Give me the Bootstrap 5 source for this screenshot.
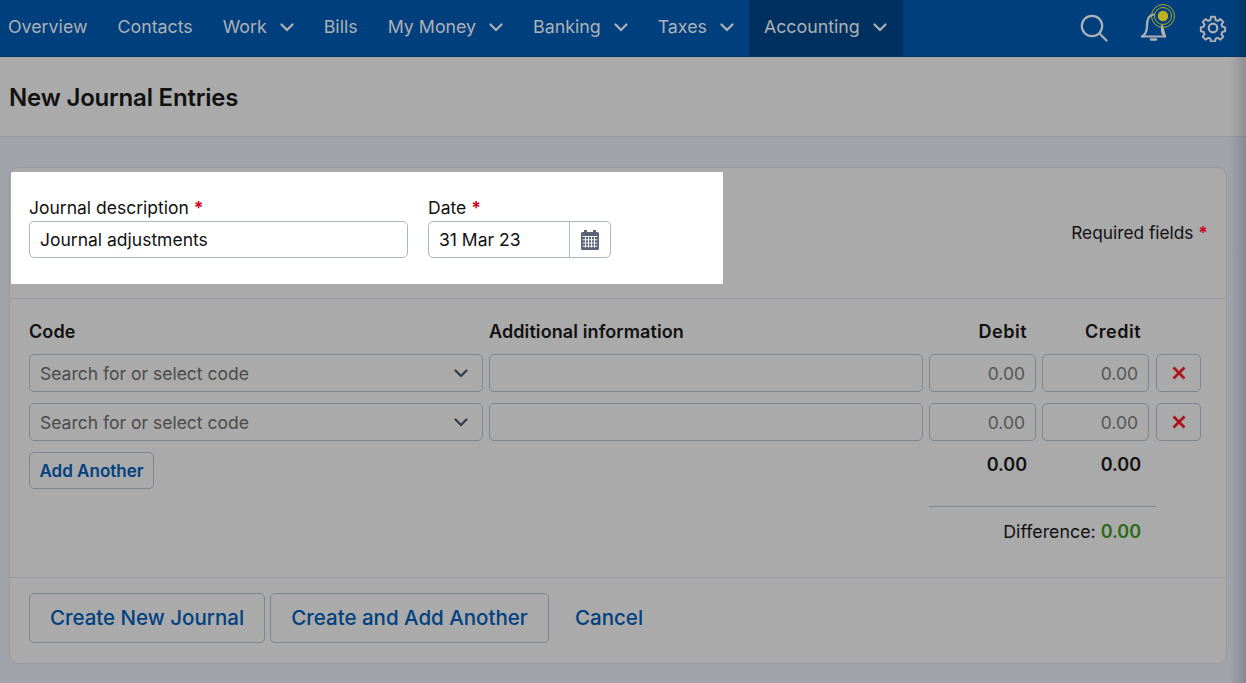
<!DOCTYPE html>
<html lang="en">
<head>
<meta charset="utf-8">
<title>New Journal Entries</title>
<link href="https://cdn.jsdelivr.net/npm/bootstrap@5.3.0/dist/css/bootstrap.min.css" rel="stylesheet">
<style>
html,body{height:683px;overflow:hidden}
body{font-family:"Inter","Liberation Sans",sans-serif;font-size:17.5px;background:#a0a3a9;color:#111;position:relative}
.topbar{height:57px;background:#003f7d;padding:0;border-bottom:1px solid #003468;align-items:stretch;flex-wrap:nowrap}
.topbar .nav-link{color:#aeb2b6;font-size:17.8px;padding:0 15px 2px;display:flex;align-items:center;gap:13px;height:56px}
.topbar .nav-item:first-child .nav-link{padding-left:8px}
.topbar .nav-item.on .nav-link{background:#00305f;padding-right:16px}
.tools{padding-right:19px;align-items:center}
.ic-search{margin-right:31px}
.ic-bell{margin-right:24px;align-self:flex-start;margin-top:4px}
.pagehead{height:80px;background:#aaa;border-bottom:1px solid #979a9f;padding-left:9px}
.pagehead h1{font-size:24px;font-weight:600;margin:0;padding-top:3px;color:#111;letter-spacing:-.2px}
.sheet{margin:30px 19px 0 9px;height:497px;background:#aaa;border:1px solid #979a9f;border-radius:10px;overflow:hidden}
.headpart{height:131px;border-bottom:1px solid #979a9f;padding-right:18px}
.spot{background:#fff;width:712px;height:112px;margin:4px 0 0 1px;padding:23px 0 0 18px;gap:20px}
.fld-a{width:379px}.fld-b{width:183px}
.fld-lab{font-size:17.5px;line-height:25px;color:#111;margin:0 0 1px}
.star{color:#d0021b;font-weight:700}
.spot .form-control{height:37px;font-size:17.500px;color:#111;border-color:#aeb6bd;border-radius:5px;padding:0 10px;background:#fff}
.spot .cal{width:42px;border:1px solid #aeb6bd;border-radius:0 5px 5px 0;background:#fff;padding:0;display:flex;align-items:center;justify-content:center}
.req{font-size:17.3px;margin-top:52px;color:#111}
.linepart{height:279px;padding:20px 0 0 19px;position:relative;border-bottom:1px solid #979a9f}
.gridrow{display:grid;grid-template-columns:454px 434px 107px 107px 45px;column-gap:6px;margin-bottom:11px}
.gridrow.cap{font-weight:600;font-size:18px;line-height:26px;margin-bottom:9px;color:#111;letter-spacing:.1px}
.gridrow>:nth-child(5){margin-left:1px}
.gridrow .form-control,.gridrow .form-select{height:38px;background-color:transparent;border-color:#7d858d;border-radius:5px;font-size:17.5px;color:#4a4a4a;padding:0 10px}
.gridrow .form-select{padding-top:2px;background-image:url("data:image/svg+xml,%3Csvg xmlns='http://www.w3.org/2000/svg' viewBox='0 0 14 9'%3E%3Cpath d='M1.5 1.5 7 7l5.5-5.5' fill='none' stroke='%23333c45' stroke-width='2.2' stroke-linecap='round'/%3E%3C/svg%3E");background-size:14px 9px;background-position:right 14px center}
.gridrow .form-control::placeholder{color:#555}
.numtext{text-align:right}
.capnum{text-align:right;padding-right:9px;letter-spacing:.5px}
.capnum2{text-align:right;padding-right:8px;letter-spacing:.5px}
.xbtn{height:38px;width:45px;border:1px solid #7d858d;border-radius:5px;background:transparent;padding:0;display:flex;align-items:center;justify-content:center}
.addbtn{height:37px;width:125px;border:1px solid #7d858d;border-radius:5px;background:transparent;color:#00407f;font-size:17px;font-weight:600;padding:2px 0 0}
.belowrow{display:flex;justify-content:space-between;align-items:flex-start}
.sums{width:227px;margin-right:70px;margin-top:1px}
.sumnums{display:flex;font-weight:600;font-size:18px;line-height:24px;padding-bottom:29px;border-bottom:1px solid #7d858d}
.sumnums span{width:98px;text-align:right}
.sumnums span+span{width:114px}
.diff{text-align:right;padding-right:15px;margin-top:12px;line-height:26px;font-size:17.800px}
.diff b{color:#2a6a16;font-weight:600;font-size:18px}
.foot{padding:15px 0 0 19px;gap:5px;align-items:center}
.bigbtn{height:50px;border:1px solid #7d858d;border-radius:5px;background:transparent;color:#00407f;font-size:20.5px;font-weight:500;padding:1px 0 0}
.b1{width:236px}.b2{width:279px}
.lnk{color:#00407f;font-size:20.5px;font-weight:500;text-decoration:none;margin-left:21px;padding-top:1px}
.edgeshade{position:absolute;top:0;right:0;bottom:0;width:16px;background:linear-gradient(to right,rgba(0,0,0,0),rgba(0,0,0,.16));pointer-events:none}
</style>
</head>
<body>
<nav class="navbar topbar justify-content-between">
  <ul class="navbar-nav flex-row">
    <li class="nav-item"><a class="nav-link" href="#">Overview</a></li>
    <li class="nav-item"><a class="nav-link" href="#">Contacts</a></li>
    <li class="nav-item"><a class="nav-link" href="#">Work <svg width="14" height="9" viewBox="0 0 14 9"><path d="M1.5 1.5 7 7l5.5-5.5" fill="none" stroke="#aeb2b6" stroke-width="2.2" stroke-linecap="round"/></svg></a></li>
    <li class="nav-item"><a class="nav-link" href="#">Bills</a></li>
    <li class="nav-item"><a class="nav-link" href="#">My Money <svg width="14" height="9" viewBox="0 0 14 9"><path d="M1.5 1.5 7 7l5.5-5.5" fill="none" stroke="#aeb2b6" stroke-width="2.2" stroke-linecap="round"/></svg></a></li>
    <li class="nav-item"><a class="nav-link" href="#">Banking <svg width="14" height="9" viewBox="0 0 14 9"><path d="M1.5 1.5 7 7l5.5-5.5" fill="none" stroke="#aeb2b6" stroke-width="2.2" stroke-linecap="round"/></svg></a></li>
    <li class="nav-item"><a class="nav-link" href="#">Taxes <svg width="14" height="9" viewBox="0 0 14 9"><path d="M1.5 1.5 7 7l5.5-5.5" fill="none" stroke="#aeb2b6" stroke-width="2.2" stroke-linecap="round"/></svg></a></li>
    <li class="nav-item on"><a class="nav-link" href="#">Accounting <svg width="14" height="9" viewBox="0 0 14 9"><path d="M1.5 1.5 7 7l5.5-5.5" fill="none" stroke="#aeb2b6" stroke-width="2.2" stroke-linecap="round"/></svg></a></li>
  </ul>
  <div class="d-flex tools">
    <svg class="ic-search" width="28" height="28" viewBox="0 0 28 28" fill="none" stroke="#aeb2b6" stroke-width="2.2" stroke-linecap="round"><circle cx="12" cy="12" r="10.200"/><path d="M19.500 19.500 26.500 26.500"/></svg>
    <svg class="ic-bell" width="36" height="38" viewBox="0 0 36 38" fill="none"><path d="M3 32.500c3-1.500 5-5 5-11 0-7 2.500-10.500 6.500-11M23 22v5c0 2 1.300 4 3 5.500z" stroke="#aeb2b6" stroke-width="2.200" stroke-linejoin="round" stroke-linecap="round"/><path d="M3 32.500h23" stroke="#aeb2b6" stroke-width="2.200" stroke-linecap="round"/><path d="M12 35.500h5" stroke="#aeb2b6" stroke-width="2.400" stroke-linecap="round"/><circle cx="24" cy="12" r="11.500" stroke="#b3a92a" stroke-width="1"/><circle cx="24" cy="12" r="8.500" stroke="#b3a92a" stroke-width="1"/><circle cx="24" cy="12" r="5.200" fill="#bdb021"/></svg>
    <svg width="28" height="28" viewBox="0 0 28 28" fill="none" stroke="#aeb2b6" stroke-width="2.200" stroke-linejoin="round"><path d="M11.800 1.500h4.400l.7 3.600 2.400 1 3-2 3.100 3.100-2 3 1 2.400 3.100.7v4.400l-3.100.7-1 2.400 2 3-3.100 3.100-3-2-2.400 1-.7 3.100h-4.400l-.7-3.100-2.400-1-3 2-3.100-3.100 2-3-1-2.400-3.100-.7v-4.400l3.100-.7 1-2.400-2-3 3.100-3.100 3 2 2.400-1z" transform="translate(1.400 1.400) scale(.9)"/><circle cx="14" cy="14" r="4.300"/></svg>
  </div>
</nav>
<div class="pagehead d-flex align-items-center"><h1>New Journal Entries</h1></div>
<main class="sheet">
  <section class="headpart d-flex justify-content-between align-items-start">
    <div class="spot d-flex">
      <div class="fld-a">
        <label class="fld-lab d-block" for="jd">Journal description <span class="star">*</span></label>
        <input id="jd" class="form-control" type="text" value="Journal adjustments">
      </div>
      <div class="fld-b">
        <label class="fld-lab d-block" for="dt">Date <span class="star">*</span></label>
        <div class="input-group">
          <input id="dt" class="form-control" type="text" value="31 Mar 23">
          <button class="cal" type="button" aria-label="Pick date"><svg width="18" height="20" viewBox="0 0 18 20"><path fill="#5b6475" d="M3 0h3v2h6V0h3v2h1.500A1.500 1.500 0 0 1 18 3.500v15a1.500 1.500 0 0 1-1.500 1.500h-15A1.500 1.500 0 0 1 0 18.500v-15A1.500 1.500 0 0 1 1.500 2H3z"/><path stroke="#fff" stroke-width=".9" d="M1.500 6.500h15M1.500 9.800h15M1.500 13h15M1.500 16.200h15M4.500 6.500v11M7.500 6.500v11M10.500 6.500v11M13.500 6.500v11"/></svg></button>
        </div>
      </div>
    </div>
    <div class="req">Required fields <span class="star">*</span></div>
  </section>
  <section class="linepart">
    <div class="gridrow cap"><div>Code</div><div>Additional information</div><div class="capnum">Debit</div><div class="capnum2">Credit</div><div></div></div>
    <div class="gridrow">
      <select class="form-select" aria-label="Code"><option>Search for or select code</option></select>
      <input class="form-control" type="text" aria-label="Additional information">
      <input class="form-control numtext" type="text" placeholder="0.00" aria-label="Debit">
      <input class="form-control numtext" type="text" placeholder="0.00" aria-label="Credit">
      <button class="xbtn" type="button" aria-label="Remove"><svg width="14" height="14" viewBox="0 0 14 14"><path d="M1.500 1.500 12.500 12.500M12.500 1.500 1.500 12.500" stroke="#ad1218" stroke-width="2.600"/></svg></button>
    </div>
    <div class="gridrow">
      <select class="form-select" aria-label="Code"><option>Search for or select code</option></select>
      <input class="form-control" type="text" aria-label="Additional information">
      <input class="form-control numtext" type="text" placeholder="0.00" aria-label="Debit">
      <input class="form-control numtext" type="text" placeholder="0.00" aria-label="Credit">
      <button class="xbtn" type="button" aria-label="Remove"><svg width="14" height="14" viewBox="0 0 14 14"><path d="M1.500 1.500 12.500 12.500M12.500 1.500 1.500 12.500" stroke="#ad1218" stroke-width="2.600"/></svg></button>
    </div>
    <div class="belowrow">
      <button class="addbtn" type="button">Add Another</button>
      <div class="sums">
        <div class="sumnums"><span>0.00</span><span>0.00</span></div>
        <div class="diff">Difference: <b>0.00</b></div>
      </div>
    </div>
  </section>
  <footer class="foot d-flex">
    <button class="bigbtn b1" type="button">Create New Journal</button>
    <button class="bigbtn b2" type="button">Create and Add Another</button>
    <a class="lnk" href="#">Cancel</a>
  </footer>
</main>
<div class="edgeshade"></div>
<script src="https://cdn.jsdelivr.net/npm/bootstrap@5.3.0/dist/js/bootstrap.bundle.min.js"></script>
</body>
</html>
